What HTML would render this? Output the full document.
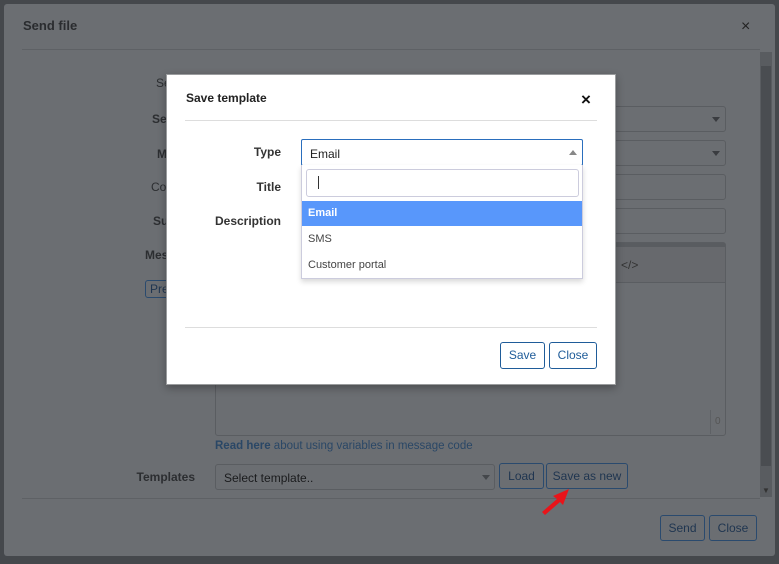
<!DOCTYPE html><html><head><style>
*{box-sizing:border-box;margin:0;padding:0}
body{width:779px;height:564px;background:#45484c;font-family:"Liberation Sans",sans-serif;position:relative;overflow:hidden;font-size:12px}
.a{position:absolute}
.bg{left:4px;top:4px;width:771px;height:552px;background:#6b6e72;border-radius:3px}
.lbl{color:#2c2e31;font-weight:bold;text-align:right;width:80px}
.bl{color:#2c2e31;font-weight:bold;font-size:12px}
.in{border:1px solid #5a5d61;border-radius:3px;height:26px}
.bb{border:1px solid #2a4a6e;border-radius:3px;color:#1f3550;text-align:center;line-height:24px;height:26px}
.fb{border:1px solid #1f5c99;border-radius:3px;color:#1f5c99;text-align:center;line-height:24px;height:27px;background:#fff}
.arr{width:0;height:0;border-left:4px solid transparent;border-right:4px solid transparent;border-top:5px solid #3a3c40}
</style></head><body>
<div class="a bg"></div>
<div class="a" style="left:23px;top:18px;font-weight:bold;color:#2a2c2f;font-size:13px">Send file</div>
<div class="a" style="left:741px;top:18px;font-size:16px;color:#222">×</div>
<div class="a" style="left:22px;top:49px;width:738px;height:1px;background:#5e6165"></div>
<div class="a" style="left:760px;top:52px;width:12px;height:445px;background:#595c60"></div>
<div class="a" style="left:761px;top:66px;width:10px;height:400px;background:#4a4d51"></div>
<div class="a" style="left:762px;top:486px;font-size:8px;color:#333">▼</div>
<div class="a" style="left:22px;top:498px;width:738px;height:1px;background:#5e6165"></div>
<div class="a bl" style="left:156px;top:76px;font-weight:normal">Se</div>
<div class="a bl" style="left:152px;top:112px">Se</div>
<div class="a bl" style="left:157px;top:147px">M</div>
<div class="a bl" style="left:151px;top:180px;font-weight:normal">Co</div>
<div class="a bl" style="left:153px;top:214px">Su</div>
<div class="a bl" style="left:145px;top:248px">Mes</div>
<div class="a" style="left:145px;top:280px;width:30px;height:18px;border:1px solid #2a4a6e;border-radius:3px;color:#1f3550;padding-left:4px;line-height:16px">Pre</div>
<div class="a in" style="left:600px;top:106px;width:126px"></div><div class="a arr" style="left:712px;top:117px"></div>
<div class="a in" style="left:600px;top:140px;width:126px"></div><div class="a arr" style="left:712px;top:151px"></div>
<div class="a in" style="left:600px;top:174px;width:126px"></div>
<div class="a in" style="left:600px;top:208px;width:126px"></div>
<div class="a" style="left:215px;top:242px;width:511px;height:194px;border:1px solid #5a5d61;border-radius:3px"></div>
<div class="a" style="left:600px;top:243px;width:125px;height:40px;border-top:4px solid #595c60;border-bottom:1px solid #5a5d61;background:#67696d"></div>
<div class="a" style="left:621px;top:258px;color:#333">&lt;/&gt;</div>
<div class="a" style="left:710px;top:410px;width:15px;height:24px;border-left:1px solid #5e6165;color:#555;font-size:10px;padding:6px 0 0 4px">0</div>
<div class="a" style="left:215px;top:440px;color:#2a4766;font-size:11.5px"><b>Read here</b> about using variables in message code</div>
<div class="a lbl" style="left:115px;top:470px">Templates</div>
<div class="a in" style="left:215px;top:464px;width:280px;color:#1a1b1d;padding:6px 8px;font-size:12px">Select template..</div><div class="a arr" style="left:482px;top:475px;border-top-color:#44474b"></div>
<div class="a bb" style="left:499px;top:463px;width:45px">Load</div>
<div class="a bb" style="left:546px;top:463px;width:82px">Save as new</div>
<svg class="a" style="left:540px;top:486px" width="32" height="30"><path d="M2 26 L17 13 L13 10 L29 3 L23 19 L20 16 L5 29Z" fill="#e8141a"/></svg>
<div class="a bb" style="left:660px;top:515px;width:45px">Send</div>
<div class="a bb" style="left:709px;top:515px;width:48px">Close</div>

<div class="a" style="left:166px;top:74px;width:450px;height:311px;background:#fff;border:1px solid #9a9c9e;box-shadow:0 3px 8px rgba(0,0,0,.3)"></div>
<div class="a" style="left:186px;top:91px;font-weight:bold;color:#222;font-size:12px">Save template</div>
<div class="a" style="left:581px;top:90px;font-size:17px;font-weight:bold;color:#111">×</div>
<div class="a" style="left:185px;top:120px;width:412px;height:1px;background:#ddd"></div>
<div class="a lbl" style="left:201px;top:145px;color:#333">Type</div>
<div class="a lbl" style="left:201px;top:180px;color:#333">Title</div>
<div class="a lbl" style="left:201px;top:214px;color:#333">Description</div>
<div class="a" style="left:301px;top:139px;width:282px;height:27px;border:1px solid #2a6ebd;border-radius:2px;padding:7px 8px;color:#222;font-size:12px">Email</div>
<div class="a" style="left:569px;top:150px;width:0;height:0;border-left:4px solid transparent;border-right:4px solid transparent;border-bottom:5px solid #888"></div>
<div class="a" style="left:301px;top:165px;width:282px;height:114px;border:1px solid #ccd;border-top:none;background:#fff;box-shadow:0 3px 5px rgba(0,0,0,.15)"></div>
<div class="a" style="left:306px;top:169px;width:273px;height:28px;border:1px solid #ccd;border-radius:3px"></div>
<div class="a" style="left:318px;top:176px;width:1px;height:13px;background:#333"></div>
<div class="a" style="left:302px;top:201px;width:280px;height:25px;background:#5897fb;color:#fff;padding:6px 6px;font-weight:bold;font-size:11px">Email</div>
<div class="a" style="left:308px;top:233px;color:#444;font-size:11px">SMS</div>
<div class="a" style="left:308px;top:259px;color:#444;font-size:11px">Customer portal</div>
<div class="a" style="left:185px;top:327px;width:412px;height:1px;background:#ddd"></div>
<div class="a fb" style="left:500px;top:342px;width:45px">Save</div>
<div class="a fb" style="left:549px;top:342px;width:48px">Close</div>
</body></html>
